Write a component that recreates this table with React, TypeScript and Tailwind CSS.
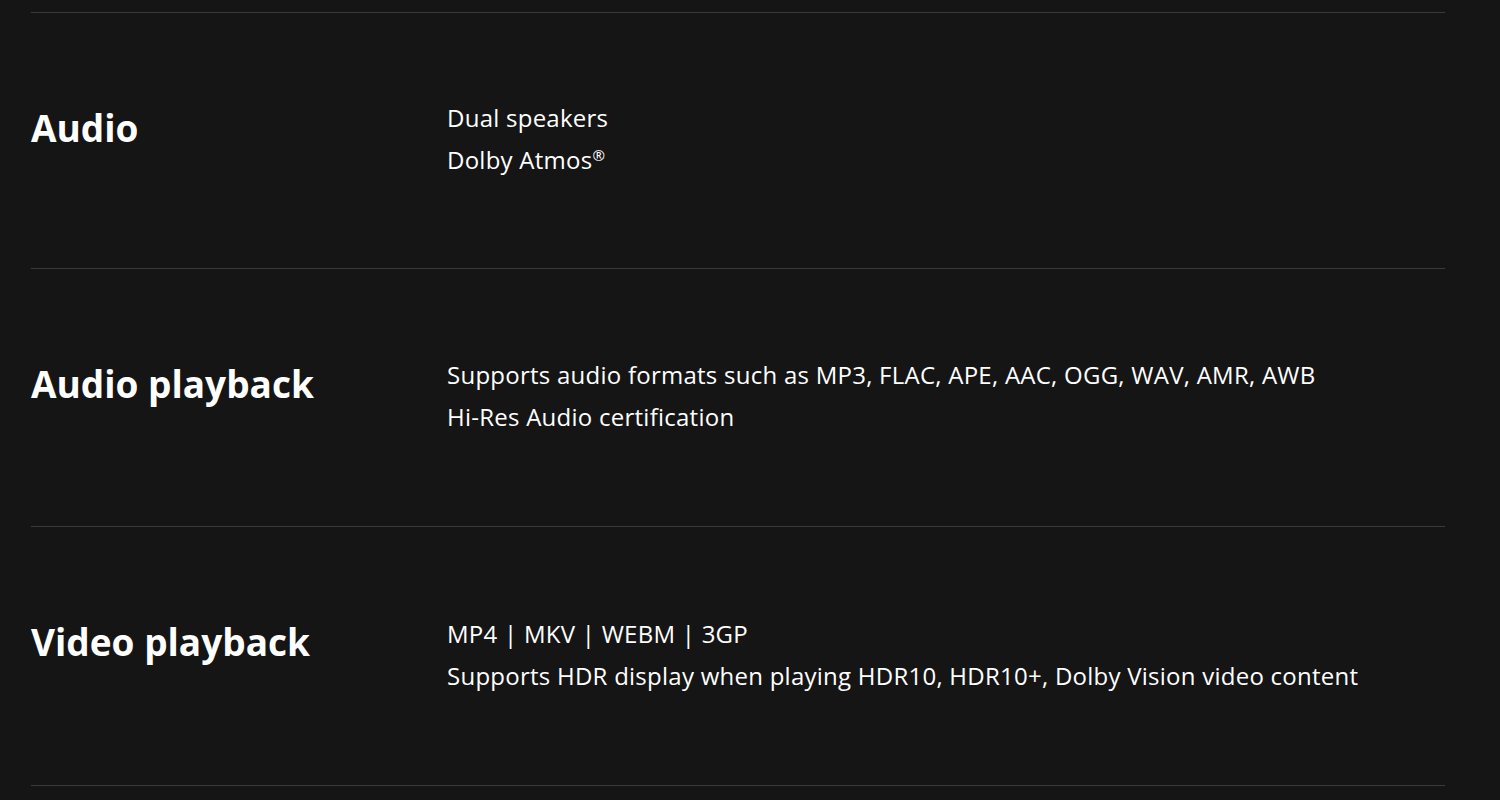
import React from "react";

const rows: { title: string; values: React.ReactNode[]; h: string; vpt: string }[] = [
  {
    title: "Audio",
    values: [
      "Dual speakers",
      <>
        Dolby Atmos<span className="relative top-[-8px] text-[15px] leading-none">®</span>
      </>,
    ],
    h: "h-[256px]",
    vpt: "pt-[84px]",
  },
  {
    title: "Audio playback",
    values: [
      "Supports audio formats such as MP3, FLAC, APE, AAC, OGG, WAV, AMR, AWB",
      "Hi-Res Audio certification",
    ],
    h: "h-[258px]",
    vpt: "pt-[85px]",
  },
  {
    title: "Video playback",
    values: [
      "MP4 | MKV | WEBM | 3GP",
      "Supports HDR display when playing HDR10, HDR10+, Dolby Vision video content",
    ],
    h: "h-[259px]",
    vpt: "pt-[86px]",
  },
];

export default function App() {
  return (
    <div
      className="w-[1500px] h-[800px] bg-[#151515] text-white overflow-hidden pt-[12px] pl-[31px] pr-[55px]"
      style={{ fontFamily: '"Open Sans", "Noto Sans", sans-serif' }}
    >
      {rows.map((r) => (
        <div
          key={r.title}
          className={`${r.h} border-t border-[#3a3a3a] grid grid-cols-[416px_1fr]`}
        >
          <div className="pt-[91px] text-[37px] leading-[48px] font-bold">
            {r.title}
          </div>
          <div className={`${r.vpt} text-[24px] leading-[42px] tracking-[0.25px]`}>
            {r.values.map((v, i) => (
              <div key={i}>{v}</div>
            ))}
          </div>
        </div>
      ))}
      <div className="border-t border-[#3a3a3a]" />
    </div>
  );
}
